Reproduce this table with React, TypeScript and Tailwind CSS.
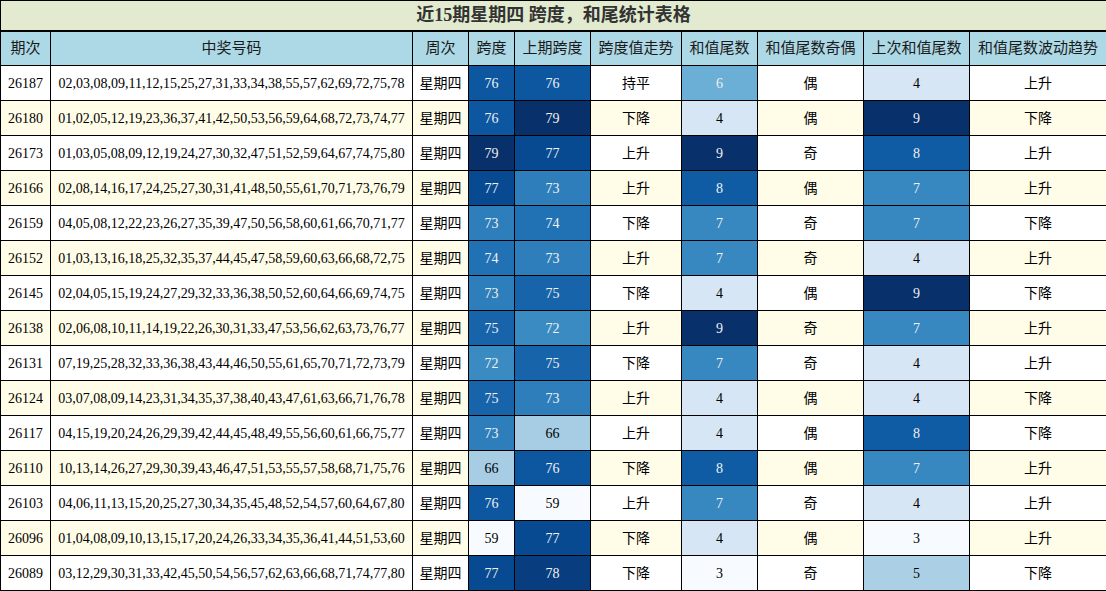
const rows: [string, string, number, number, string, number, string, number, string][] = [
  ["26187", "02,03,08,09,11,12,15,25,27,31,33,34,38,55,57,62,69,72,75,78", 76, 76, "持平", 6, "偶", 4, "上升"],
  ["26180", "01,02,05,12,19,23,36,37,41,42,50,53,56,59,64,68,72,73,74,77", 76, 79, "下降", 4, "偶", 9, "下降"],
  ["26173", "01,03,05,08,09,12,19,24,27,30,32,47,51,52,59,64,67,74,75,80", 79, 77, "上升", 9, "奇", 8, "上升"],
  ["26166", "02,08,14,16,17,24,25,27,30,31,41,48,50,55,61,70,71,73,76,79", 77, 73, "上升", 8, "偶", 7, "上升"],
  ["26159", "04,05,08,12,22,23,26,27,35,39,47,50,56,58,60,61,66,70,71,77", 73, 74, "下降", 7, "奇", 7, "下降"],
  ["26152", "01,03,13,16,18,25,32,35,37,44,45,47,58,59,60,63,66,68,72,75", 74, 73, "上升", 7, "奇", 4, "上升"],
  ["26145", "02,04,05,15,19,24,27,29,32,33,36,38,50,52,60,64,66,69,74,75", 73, 75, "下降", 4, "偶", 9, "下降"],
  ["26138", "02,06,08,10,11,14,19,22,26,30,31,33,47,53,56,62,63,73,76,77", 75, 72, "上升", 9, "奇", 7, "上升"],
  ["26131", "07,19,25,28,32,33,36,38,43,44,46,50,55,61,65,70,71,72,73,79", 72, 75, "下降", 7, "奇", 4, "上升"],
  ["26124", "03,07,08,09,14,23,31,34,35,37,38,40,43,47,61,63,66,71,76,78", 75, 73, "上升", 4, "偶", 4, "下降"],
  ["26117", "04,15,19,20,24,26,29,39,42,44,45,48,49,55,56,60,61,66,75,77", 73, 66, "上升", 4, "偶", 8, "下降"],
  ["26110", "10,13,14,26,27,29,30,39,43,46,47,51,53,55,57,58,68,71,75,76", 66, 76, "下降", 8, "偶", 7, "上升"],
  ["26103", "04,06,11,13,15,20,25,27,30,34,35,45,48,52,54,57,60,64,67,80", 76, 59, "上升", 7, "奇", 4, "上升"],
  ["26096", "01,04,08,09,10,13,15,17,20,24,26,33,34,35,36,41,44,51,53,60", 59, 77, "下降", 4, "偶", 3, "上升"],
  ["26089", "03,12,29,30,31,33,42,45,50,54,56,57,62,63,66,68,71,74,77,80", 77, 78, "下降", 3, "奇", 5, "下降"],
];

const headers = ["期次", "中奖号码", "周次", "跨度", "上期跨度", "跨度值走势", "和值尾数", "和值尾数奇偶", "上次和值尾数", "和值尾数波动趋势"];
const widths = [50, 362, 56, 46, 76, 91, 76, 106, 106, 137];

// matplotlib "Blues"
const stops = ["#f7fbff", "#deebf7", "#c6dbef", "#9ecae1", "#6baed6", "#4292c6", "#2171b5", "#08519c", "#08306b"];
const hex = (h: string) => [1, 3, 5].map((i) => parseInt(h.slice(i, i + 2), 16));

function blues(v: number, min: number, max: number) {
  const t = Math.min(1, Math.max(0, (v - min) / (max - min))) * (stops.length - 1);
  const i = Math.min(stops.length - 2, Math.floor(t));
  const f = t - i;
  const a = hex(stops[i]);
  const b = hex(stops[i + 1]);
  const rgb = a.map((c, k) => Math.round(c + (b[k] - c) * f));
  const lin = rgb.map((c) => {
    const s = c / 255;
    return s <= 0.03928 ? s / 12.92 : Math.pow((s + 0.055) / 1.055, 2.4);
  });
  const lum = 0.2126 * lin[0] + 0.7152 * lin[1] + 0.0722 * lin[2];
  return { backgroundColor: `rgb(${rgb.join(",")})`, color: lum < 0.408 ? "#f1f1f1" : "#000000" };
}

const range = (k: 2 | 3 | 5 | 7) => {
  const vals = rows.map((r) => r[k] as number);
  return [Math.min(...vals), Math.max(...vals)] as const;
};
const [sMin, sMax] = range(2);
const [pMin, pMax] = range(3);
const [tMin, tMax] = range(5);
const [lMin, lMax] = range(7);

const cell = "border border-black text-center align-middle p-0";

export default function App() {
  return (
    <div className="w-[1106px] h-[591px] bg-white font-['Liberation_Serif','Noto_Sans_CJK_SC',serif] text-[14px] text-black">
      <table className="table-fixed border-collapse w-[1106px]">
        <colgroup>
          {widths.map((w, i) => (
            <col key={i} style={{ width: w }} />
          ))}
        </colgroup>
        <thead>
          <tr className="h-[30px]">
            <th colSpan={10} className="border border-black border-b-2 bg-[#e2ebcf] text-[18px] font-bold text-[#333333] text-center p-0">
              近15期星期四 跨度，和尾统计表格
            </th>
          </tr>
          <tr className="h-[35px] bg-[#add8e6]">
            {headers.map((h) => (
              <th key={h} className="border border-black font-normal text-[15px] text-[#1a1a1a] text-center p-0">
                {h}
              </th>
            ))}
          </tr>
        </thead>
        <tbody>
          {rows.map((r, i) => (
            <tr key={r[0]} className={i % 2 === 0 ? "h-[35px] bg-white" : "h-[35px] bg-[#fffde8]"}>
              <td className={cell}>{r[0]}</td>
              <td className={cell}>{r[1]}</td>
              <td className={cell}>星期四</td>
              <td className={cell} style={blues(r[2], sMin, sMax)}>{r[2]}</td>
              <td className={cell} style={blues(r[3], pMin, pMax)}>{r[3]}</td>
              <td className={cell}>{r[4]}</td>
              <td className={cell} style={blues(r[5], tMin, tMax)}>{r[5]}</td>
              <td className={cell}>{r[6]}</td>
              <td className={cell} style={blues(r[7], lMin, lMax)}>{r[7]}</td>
              <td className={cell}>{r[8]}</td>
            </tr>
          ))}
        </tbody>
      </table>
    </div>
  );
}
